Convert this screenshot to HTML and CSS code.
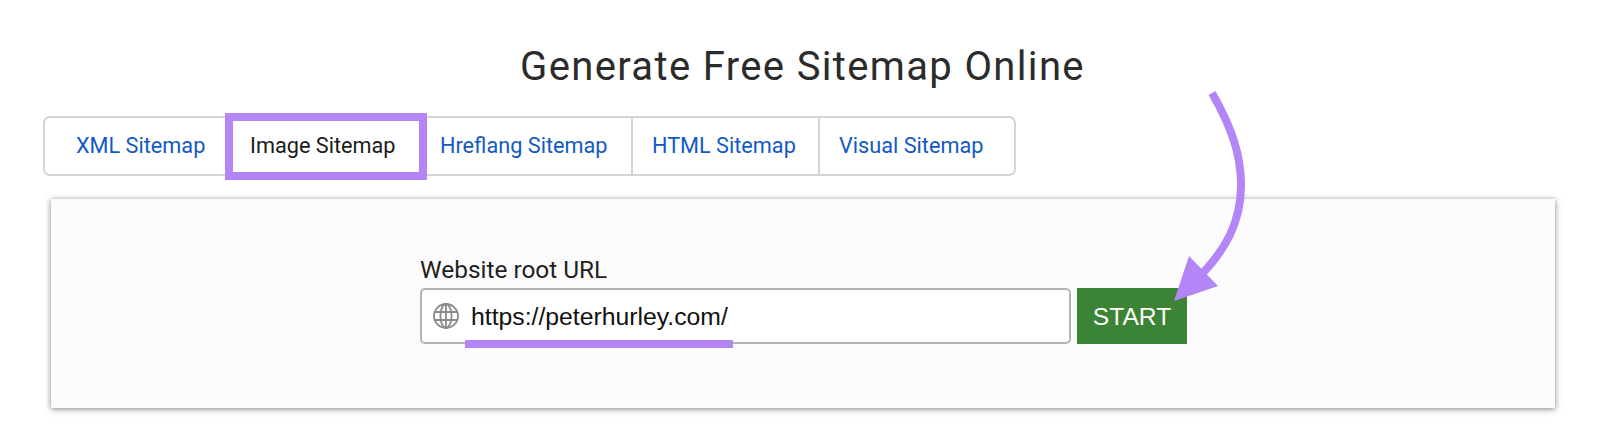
FILE: index.html
```html
<!DOCTYPE html>
<html lang="en">
<head>
<meta charset="utf-8">
<title>Generate Free Sitemap Online</title>
<link rel="stylesheet" href="styles.css">
</head>
<body>
<h1 class="title">Generate Free Sitemap Online</h1>
<nav class="tabs">
  <a class="tab tab-xml">XML Sitemap</a>
  <a class="tab tab-image">Image Sitemap</a>
  <a class="tab tab-href">Hreflang Sitemap</a>
  <a class="tab tab-html">HTML Sitemap</a>
  <a class="tab tab-visual">Visual Sitemap</a>
</nav>
<main class="panel">
  <form class="form">
    <label class="label">Website root URL</label>
    <div class="row">
      <div class="input">
        <svg class="globe" viewBox="0 0 26 26" width="26" height="26" fill="none" stroke="#8a8a8a" stroke-width="1.8">
          <circle cx="13" cy="13" r="12"/>
          <ellipse cx="13" cy="13" rx="5.6" ry="12"/>
          <path d="M13 1v24M2 9h22M2 17h22"/>
        </svg>
        <span class="url">https://peterhurley.com/</span>
        <span class="underline"></span>
      </div>
      <button class="start" type="button">START</button>
    </div>
  </form>
</main>
<svg class="arrow" viewBox="0 0 1600 442" width="1600" height="442" fill="none">
  <path d="M1212 93C1232 128 1241 155 1241 185C1241 222 1226 250 1198 278" stroke="#b385f7" stroke-width="8"/>
  <path d="M1189 256L1218 286L1174 301Z" fill="#b385f7"/>
</svg>
</body>
</html>
```
FILE: styles.css
```css
* { box-sizing: border-box; }
html, body { margin: 0; padding: 0; background: #fff; }
body { width: 1600px; height: 442px; overflow: hidden; position: relative; font-family: Roboto, sans-serif; }
.title {
  margin: 0;
  padding-top: 44px;
  padding-left: 5px;
  height: 116px;
  text-align: center;
  font: 400 40px/46px Roboto, sans-serif;
  letter-spacing: 1.35px;
  color: #2b2b2b;
}
.tabs {
  display: flex;
  margin-left: 43px;
  width: 973px;
  height: 60px;
  border: 2px solid #d4d4d4;
  border-radius: 7px;
  background: #fff;
}
.tab {
  display: flex;
  align-items: center;
  padding-left: 19px;
  padding-bottom: 2px;
  font-size: 21.7px;
  color: #1259c3;
  border-right: 2px solid #d4d4d4;
}
.tab-xml { width: 180px; padding-left: 31px; border-right: 0; }
.tab-image {
  position: relative;
  width: 202px;
  height: 67px;
  margin: -5px 0;
  padding-left: 17px;
  border: 8px solid #b385f7;
  color: #1a1a1a;
  background: #fff;
}
.tab-href { width: 206px; padding-left: 13px; }
.tab-html { width: 187px; }
.tab-visual { flex: 1; border-right: 0; }
.panel {
  margin: 23px 0 0 51px;
  width: 1504px;
  height: 209px;
  background: #fbfbfb;
  box-shadow: 0 1px 6px rgba(0,0,0,.5);
}
.form { padding: 53px 0 0 369px; }
.label {
  display: block;
  font-size: 24.4px;
  line-height: 36px;
  color: #1f1f1f;
}
.row { display: flex; gap: 6px; }
.input {
  position: relative;
  display: flex;
  align-items: center;
  width: 651px;
  height: 56px;
  padding-left: 11px;
  background: #fff;
  border: 2px solid #b4b4b4;
  border-radius: 5px;
}
.url {
  margin-left: 12px;
  padding-top: 1px;
  font: 400 24.75px "Liberation Sans", Arial, sans-serif;
  color: #111;
}
.underline {
  position: absolute;
  left: 43px;
  bottom: -6px;
  width: 268px;
  height: 8px;
  background: #b385f7;
}
.start {
  width: 110px;
  height: 56px;
  padding: 2px 0 0;
  border: 0;
  background: #3b8335;
  color: #fff;
  font: 400 24.6px "Liberation Sans", Arial, sans-serif;
}
.arrow { position: absolute; left: 0; top: 0; pointer-events: none; }
```
